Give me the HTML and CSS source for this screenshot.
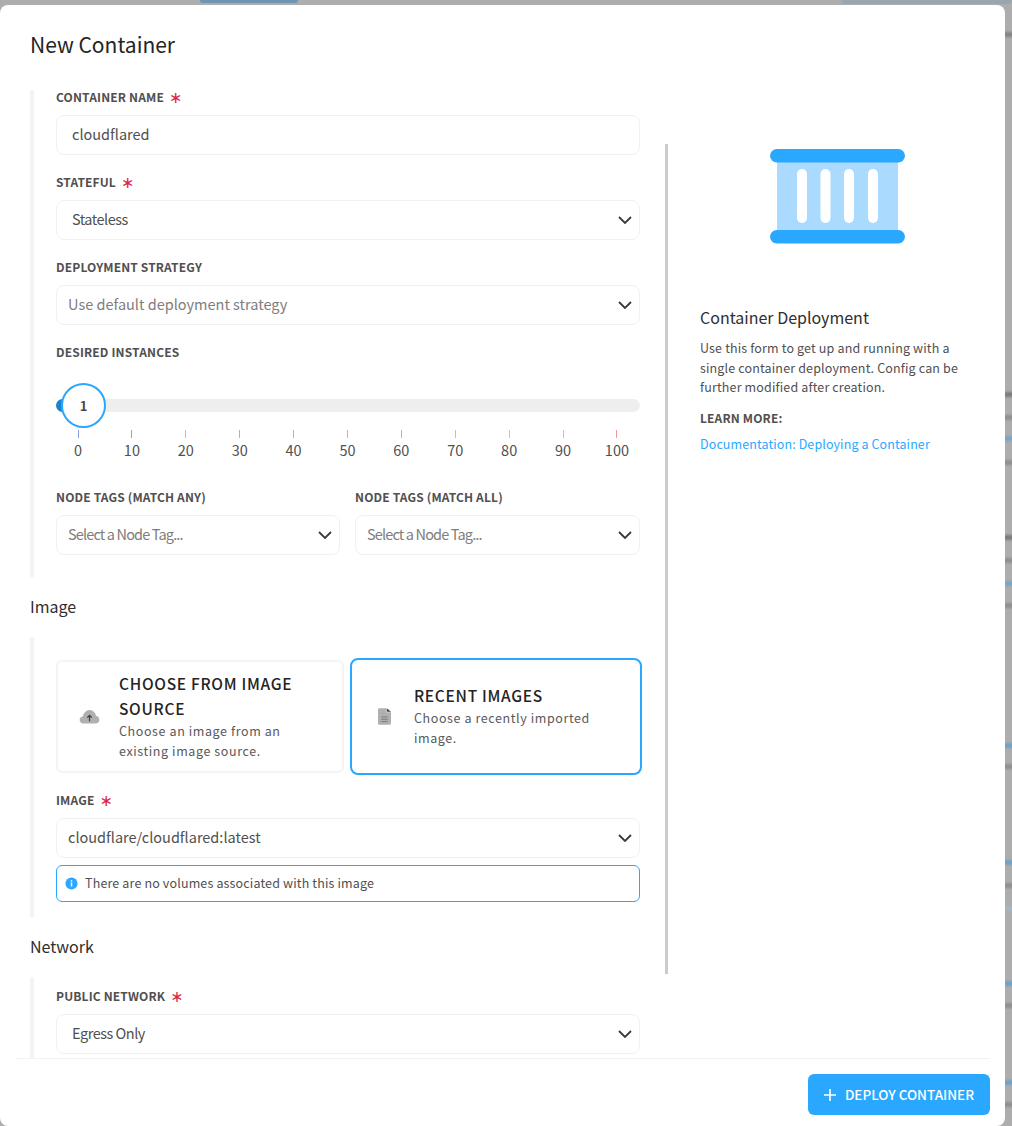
FILE: index.html
```html
<!DOCTYPE html>
<html lang="en">
<head>
<meta charset="utf-8">
<title>New Container</title>
<link rel="stylesheet" href="styles.css">
</head>
<body>
<div class="backdrop">
  <div class="top-pill"></div>
  <div class="top-pill second"></div>
  <div class="strip"></div>
</div>
<div class="modal">
  <h1 class="title">New Container</h1>
  <div class="content">
    <div class="form-col">
      <section class="group first">
        <div class="field">
          <label class="label"><span>CONTAINER NAME</span><span class="req">∗</span></label>
          <div class="input"><span class="val pad">cloudflared</span></div>
        </div>
        <div class="field">
          <label class="label"><span>STATEFUL</span><span class="req">∗</span></label>
          <div class="input"><span class="val pad narrow">Stateless</span><svg class="chev" viewBox="0 0 14 8"><path d="M1 1l6 6 6-6"/></svg></div>
        </div>
        <div class="field">
          <label class="label"><span>DEPLOYMENT STRATEGY</span></label>
          <div class="input"><span class="val muted">Use default deployment strategy</span><svg class="chev" viewBox="0 0 14 8"><path d="M1 1l6 6 6-6"/></svg></div>
        </div>
        <div class="field">
          <label class="label"><span>DESIRED INSTANCES</span></label>
          <div class="slider">
            <div class="track"><div class="fill"></div><div class="thumb">1</div></div>
            <div class="marks">
              <div class="mark"><i class="m0"></i><span>0</span></div>
              <div class="mark"><i class="m1"></i><span>10</span></div>
              <div class="mark"><i class="m2"></i><span>20</span></div>
              <div class="mark"><i class="m3"></i><span>30</span></div>
              <div class="mark"><i class="m4"></i><span>40</span></div>
              <div class="mark"><i class="m5"></i><span>50</span></div>
              <div class="mark"><i class="m6"></i><span>60</span></div>
              <div class="mark"><i class="m7"></i><span>70</span></div>
              <div class="mark"><i class="m8"></i><span>80</span></div>
              <div class="mark"><i class="m9"></i><span>90</span></div>
              <div class="mark"><i class="m10"></i><span>100</span></div>
            </div>
          </div>
        </div>
        <div class="two">
          <div class="field">
            <label class="label"><span>NODE TAGS (MATCH ANY)</span></label>
            <div class="input"><span class="val muted tight">Select a Node Tag...</span><svg class="chev" viewBox="0 0 14 8"><path d="M1 1l6 6 6-6"/></svg></div>
          </div>
          <div class="field">
            <label class="label"><span>NODE TAGS (MATCH ALL)</span></label>
            <div class="input"><span class="val muted tight">Select a Node Tag...</span><svg class="chev" viewBox="0 0 14 8"><path d="M1 1l6 6 6-6"/></svg></div>
          </div>
        </div>
      </section>

      <h2 class="section-title">Image</h2>
      <section class="group image-group">
        <div class="cards">
          <div class="card">
            <svg class="card-icon cloud" viewBox="0 0 22 16"><path class="ic-body" d="M5 15.500C2.400 15.500.5 13.800.5 11.600c0-2 1.500-3.500 3.400-3.800C4.600 4.400 7.500 1 11 1c3.500 0 6.300 2.700 6.900 6.200 2.100.3 3.600 2.100 3.600 4.300 0 2.200-1.800 4-4 4z"/><path class="ic-mark" d="M11 13V7M8.600 9.200 11 6.800l2.400 2.400"/></svg>
            <div class="card-text">
              <div class="card-title">CHOOSE FROM IMAGE SOURCE</div>
              <div class="card-desc">Choose an image from an existing image source.</div>
            </div>
          </div>
          <div class="card active">
            <svg class="card-icon file" viewBox="0 0 14 18"><path class="ic-body" d="M1.500 0H9v4.500h5V16a2 2 0 0 1-2 2H1.500A1.500 1.500 0 0 1 0 16.500v-15A1.500 1.500 0 0 1 1.500 0z"/><path class="ic-corner" d="M9.500 0 14 4h-4.500z"/><path class="ic-lines" d="M3.500 9.500h7M3.500 12h7M3.500 14.500h7"/></svg>
            <div class="card-text">
              <div class="card-title">RECENT IMAGES</div>
              <div class="card-desc">Choose a recently imported image.</div>
            </div>
          </div>
        </div>
        <div class="field image-field">
          <label class="label"><span>IMAGE</span><span class="req">∗</span></label>
          <div class="input"><span class="val">cloudflare/cloudflared:latest</span><svg class="chev" viewBox="0 0 14 8"><path d="M1 1l6 6 6-6"/></svg></div>
        </div>
        <div class="notice">
          <svg class="info" viewBox="0 0 14 14"><circle cx="7" cy="7" r="6.500"/><rect x="6.200" y="6" width="1.600" height="4.200"/><rect x="6.200" y="3.500" width="1.600" height="1.600"/></svg>
          <span class="notice-text">There are no volumes associated with this image</span>
        </div>
      </section>

      <h2 class="section-title">Network</h2>
      <section class="group net-group">
        <div class="field">
          <label class="label"><span>PUBLIC NETWORK</span><span class="req">∗</span></label>
          <div class="input"><span class="val pad narrow">Egress Only</span><svg class="chev" viewBox="0 0 14 8"><path d="M1 1l6 6 6-6"/></svg></div>
        </div>
      </section>
    </div>

    <aside class="side">
      <svg class="hero" viewBox="0 0 135 95">
        <rect x="7" y="6" width="121" height="83" fill="#aadbff"/>
        <rect x="0" y="0" width="135" height="13.500" rx="6.750" fill="#2aa8ff"/>
        <rect x="0" y="81" width="135" height="13.500" rx="6.750" fill="#2aa8ff"/>
        <rect x="27" y="20" width="10" height="54" rx="5" fill="#fff"/>
        <rect x="50.500" y="20" width="10" height="54" rx="5" fill="#fff"/>
        <rect x="74" y="20" width="10" height="54" rx="5" fill="#fff"/>
        <rect x="98" y="20" width="10" height="54" rx="5" fill="#fff"/>
      </svg>
      <h3 class="side-title">Container Deployment</h3>
      <p class="side-text">Use this form to get up and running with a single container deployment. Config can be further modified after creation.</p>
      <div class="side-label">LEARN MORE:</div>
      <a class="side-link" href="#">Documentation: Deploying a Container</a>
    </aside>
  </div>
  <footer class="footer">
    <button class="deploy"><svg class="plus" viewBox="0 0 12 12"><path d="M6 0v12M0 6h12"/></svg><span class="deploy-text">DEPLOY CONTAINER</span></button>
  </footer>
</div>
</body>
</html>
```
FILE: styles.css
```css
* { box-sizing: border-box; }
html, body { margin: 0; height: 100%; }
body {
  width: 1012px;
  height: 1126px;
  overflow: hidden;
  position: relative;
  background: #adadad;
  font-family: "Noto Sans CJK JP", "Noto Sans", sans-serif;
  color: #514f4f;
}
.backdrop { position: absolute; inset: 0; overflow: hidden; }
.top-pill { position: absolute; left: 200px; top: 0; width: 98px; height: 3px; background: #6e95b3; border-radius: 0 0 4px 4px; filter: blur(.6px); }
.top-pill.second { left: 842px; width: 170px; height: 4px; background: #9aa6af; }
.strip {
  position: absolute;
  right: -4px; top: 0;
  width: 16px; height: 1126px;
  filter: blur(1px);
  background-repeat: no-repeat;
  background-size: 100% 5px;
  background-image:
    linear-gradient(#858585, #858585), linear-gradient(#7d7d7d, #7d7d7d), linear-gradient(#909090, #909090),
    linear-gradient(#79a6c6, #79a6c6), linear-gradient(#909090, #909090), linear-gradient(#7d7d7d, #7d7d7d),
    linear-gradient(#909090, #909090), linear-gradient(#79a6c6, #79a6c6), linear-gradient(#909090, #909090),
    linear-gradient(#6fa3c9, #6fa3c9), linear-gradient(#909090, #909090), linear-gradient(#6fa3c9, #6fa3c9),
    linear-gradient(#909090, #909090), linear-gradient(#a2b6c4, #a2b6c4), linear-gradient(#6fa3c9, #6fa3c9),
    linear-gradient(#909090, #909090), linear-gradient(#6fa3c9, #6fa3c9), linear-gradient(#909090, #909090);
  background-position:
    0 32px, 0 392px, 0 415px,
    0 436px, 0 460px, 0 535px,
    0 558px, 0 581px, 0 603px,
    0 743px, 0 764px, 0 860px,
    0 883px, 0 906px, 0 981px,
    0 1003px, 0 1080px, 0 1102px;
}
.modal {
  position: absolute;
  left: 0; top: 5px;
  width: 1005px; height: 1121px;
  background: #fff;
  border-radius: 8px;
  padding: 0 15px 0 16px;
  display: flex;
  flex-direction: column;
}
.title {
  margin: 0;
  padding: 23px 0 0 14px;
  height: 85px;
  font-size: 21px;
  line-height: 32px;
  font-weight: 400;
  color: #252323;
}
.content { flex: 1; display: flex; min-height: 0; }
.form-col { width: 624px; flex: none; padding-left: 14px; }
.group { border-left: 4px solid #f4f4f4; padding-left: 22px; }
.first { height: 487px; }
.label {
  display: flex;
  align-items: flex-start;
  column-gap: 5px;
  position: relative;
  top: -2px;
  font-size: 12px;
  line-height: 18px;
  font-weight: 700;
  letter-spacing: .15px;
  color: #514f4f;
  height: 25px;
  white-space: nowrap;
}
.req {
  font-family: "DejaVu Sans", sans-serif;
  color: #e0254a;
  font-size: 16px;
  line-height: 19px;
  font-weight: 400;
}
.input {
  height: 40px;
  border: 1px solid #f1f1f1;
  border-radius: 8px;
  display: flex;
  align-items: center;
  justify-content: space-between;
  padding: 0 7px 0 11px;
  margin-bottom: 20px;
  background: #fff;
}
.val { font-size: 14.500px; padding-bottom: 4px; color: #514f4f; white-space: nowrap; }
.val.pad { padding-left: 4px; }
.val.narrow { letter-spacing: -.5px; }
.val.muted { color: #7f7d7d; }
.val.tight { letter-spacing: -.85px; }
.chev { width: 14px; height: 8px; fill: none; stroke: #3a3a3a; stroke-width: 1.800; }
.slider { height: 120px; padding-top: 29px; }
.track { position: relative; height: 13px; background: #eeeeef; border-radius: 7px; }
.fill { width: 16px; height: 13px; background: #1a83cf; border-radius: 7px 0 0 7px; }
.thumb {
  position: absolute;
  left: 5px; top: -16px;
  width: 45px; height: 45px;
  border-radius: 50%;
  border: 2px solid #2aa8ff;
  background: #fff;
  display: flex; align-items: center; justify-content: center;
  font-size: 13px; font-weight: 700; color: #4a4848;
}
.marks { display: flex; justify-content: space-between; margin: 18px 0 0 22px; width: 539px; }
.mark { width: 0; display: flex; flex-direction: column; align-items: center; }
.mark i { display: block; width: 1px; height: 8px; flex: none; }
.mark span { font-size: 14.500px; line-height: 20px; margin-top: 2px; color: #514f4f; white-space: nowrap; }
.m0 { background: #8ba0e8; } .m1 { background: #7fa8dd; } .m2 { background: #8fcbf0; }
.m3 { background: #86c4cc; } .m4 { background: #8cc4dc; } .m5 { background: #a6bfc4; }
.m6 { background: #a8b9bd; } .m7 { background: #c2c4a8; } .m8 { background: #e8bd9a; }
.m9 { background: #eeb98f; } .m10 { background: #e99b9b; }
.two { display: grid; grid-template-columns: 284px 285px; column-gap: 15px; }
.section-title { margin: 0; height: 60px; padding-top: 18px; font-size: 16px; line-height: 22px; font-weight: 400; color: #302e2e; }
.image-group { height: 280px; padding-top: 21px; }
.cards { display: flex; align-items: center; width: 586px; margin-bottom: 18px; }
.card {
  width: 288px;
  height: 113px;
  border: 2px solid #f4f4f4;
  border-radius: 6px;
  display: flex;
  align-items: center;
  padding-left: 21px;
  background: #fff;
  flex: none;
}
.card.active {
  width: 292px;
  height: 117px;
  border-color: #2aa8ff;
  border-radius: 8px;
  margin-left: 6px;
  padding-left: 26px;
}
.card-icon { flex: none; }
.cloud { width: 21px; height: 15px; margin-right: 19px; }
.file { width: 13px; height: 17px; margin-right: 23px; }
.ic-body { fill: #b0b0b0; }
.ic-mark { fill: none; stroke: #3f3f3f; stroke-width: 1.300; }
.ic-corner { fill: #3f3f3f; }
.ic-lines { stroke: #7a7a7a; stroke-width: 1; fill: none; }
.card-text { position: relative; top: -1px; max-width: 200px; }
.card-title { font-size: 15.500px; line-height: 25px; font-weight: 500; letter-spacing: .7px; color: #252323; }
.card-desc { font-size: 12.500px; line-height: 20px; letter-spacing: .6px; color: #5a5858; }
.image-field .input { margin-bottom: 7px; }
.notice {
  height: 37px;
  border: 1px solid #2aa8ff;
  border-radius: 6px;
  display: flex;
  align-items: center;
  padding-left: 8px;
  font-size: 12.500px;
  letter-spacing: .15px;
  color: #514f4f;
}
.notice-text { padding-bottom: 2px; }
.info { width: 13px; height: 13px; margin-right: 7px; fill: #2aa8ff; }
.info rect { fill: #fff; }
.net-group { padding-top: 12px; height: 81px; }
.side { position: relative; flex: 1; padding-left: 60px; margin-top: 54px; height: 830px; }
.side::before { content: ""; position: absolute; left: 25px; top: 0; bottom: 0; width: 3px; background: #cbcbcb; }
.hero { display: block; width: 135px; height: 95px; margin: 5px 0 0 70px; }
.side-title { margin: 59px 0 0; font-size: 16px; line-height: 28px; font-weight: 400; color: #302e2e; }
.side-text { margin: 7px 0 0; width: 270px; font-size: 12.500px; line-height: 19.500px; letter-spacing: .15px; color: #514f4f; }
.side-label { margin-top: 12px; font-size: 12px; line-height: 18px; font-weight: 700; letter-spacing: .15px; color: #514f4f; }
.side-link { display: block; margin-top: 8px; font-size: 12.500px; line-height: 18px; letter-spacing: .1px; color: #2aa8ff; text-decoration: none; }
.footer { height: 68px; flex: none; border-top: 1px solid #f2f2f2; display: flex; justify-content: flex-end; padding-top: 15px; align-items: flex-start; }
.deploy {
  width: 182px; height: 41px;
  border: 0;
  border-radius: 6px;
  background: #2aa8ff;
  color: #fff;
  font-family: inherit;
  font-size: 13.500px;
  font-weight: 500;
  display: flex; align-items: center; justify-content: center;
  padding: 0;
}
.deploy-text { position: relative; top: -1px; }
.plus { width: 12px; height: 12px; margin-right: 9px; fill: none; stroke: #fff; stroke-width: 1.600; }
```
